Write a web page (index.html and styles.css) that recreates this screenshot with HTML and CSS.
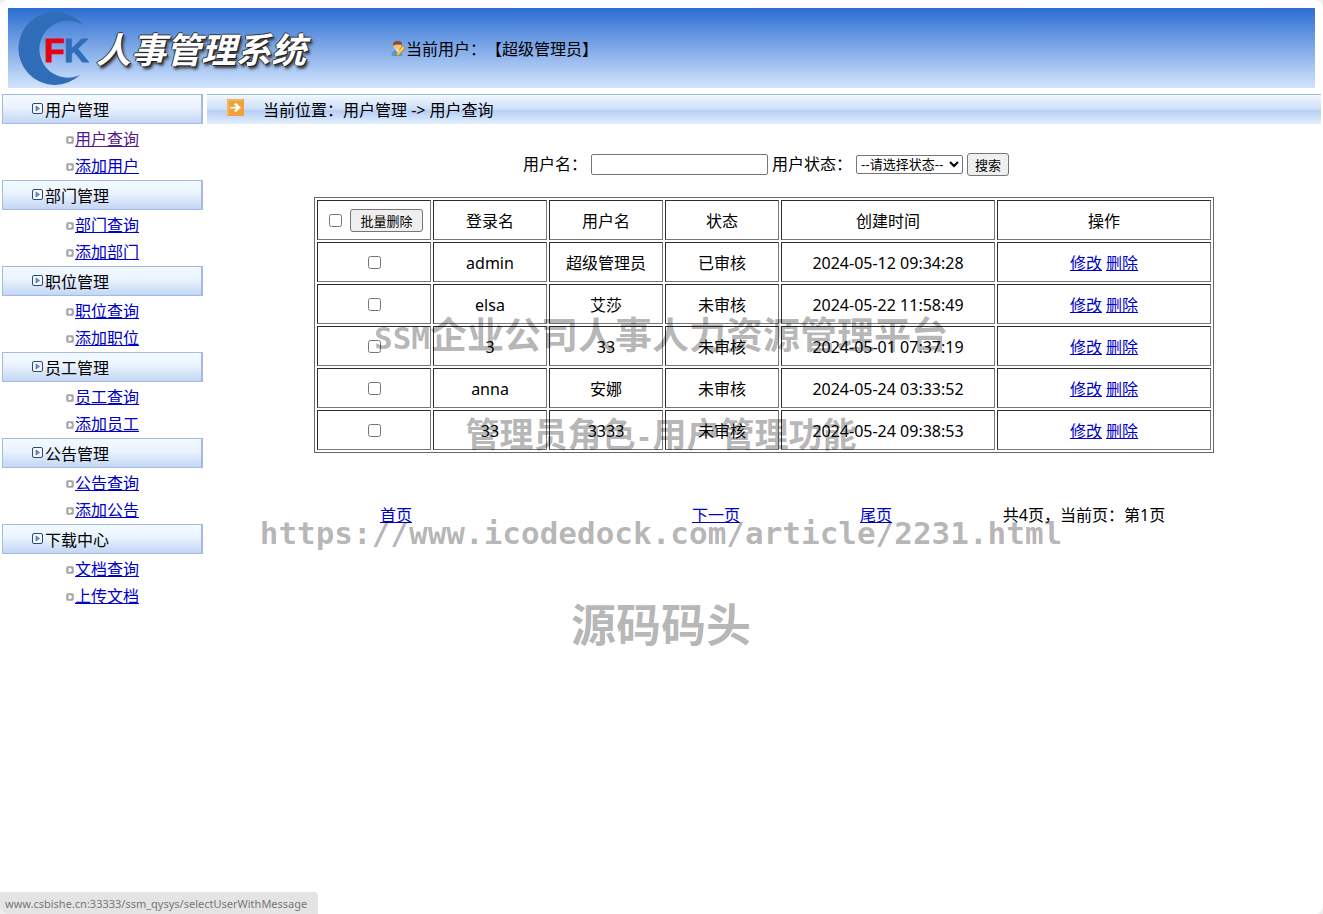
FILE: index.html
```html
<!DOCTYPE html>
<html lang="zh-CN">
<head>
<meta charset="utf-8">
<title>人事管理系统</title>
<link rel="stylesheet" href="styles.css">
</head>
<body>
<svg class="defs" aria-hidden="true">
  <symbol id="play" viewBox="0 0 11 11"><rect x=".5" y=".5" width="10" height="10" rx="1.5" fill="#f5f9ff" stroke="#294a77"/><path d="M4 3v5l3.500-2.500z" fill="#7890bd" stroke="#4867a0" stroke-width=".7"/></symbol>
  <symbol id="dot" viewBox="0 0 8 8"><rect x=".5" y=".5" width="7" height="7" rx="1.500" fill="#a6a6a6" stroke="#b9b9b9"/><path d="M2.500 2h2.200L6.300 4 4.700 6H2.500z" fill="#fff"/></symbol>
</svg>
<div class="page">
<header class="header">
  <div class="brand">
    <svg class="logo" viewBox="0 0 82 80" role="img" aria-label="FK">
      <path d="M75 17 A36.500 36.500 0 1 0 72 67 A28.500 28.500 0 1 1 75 17Z" fill="#2f6db8"/>
      <text x="36" y="54" class="logo-f">F</text><text x="56" y="54" class="logo-k">K</text>
    </svg>
    <h1 class="brand-name">人事管理系统</h1>
  </div>
  <div class="user">
    <svg class="user-icon" viewBox="0 0 15 16"><path d="M1 15Q1 9 6 9T12 15Z" fill="#4f9bd5"/><path d="M5 8L8 13 9 8Z" fill="#fff"/><circle cx="7" cy="5" r="4" fill="#f5c184"/><path d="M2.500 5Q2 0 7 0T11.500 4L8 3.500 4 4Z" fill="#875125"/><path d="M5 14L12 5 15 7 8 15Z" fill="#f4bd45" stroke="#a46c28" stroke-width=".7"/><path d="M7 12L13 6" stroke="#fff0a5"/></svg>
    <span>当前用户：【超级管理员】</span>
  </div>
</header>
<div class="main">
  <nav class="sidebar">
    <h2 class="group"><svg><use href="#play"/></svg>用户管理</h2>
    <ul><li><svg><use href="#dot"/></svg><a class="visited" href="#user-list">用户查询</a></li><li><svg><use href="#dot"/></svg><a href="#user-add">添加用户</a></li></ul>
    <h2 class="group"><svg><use href="#play"/></svg>部门管理</h2>
    <ul><li><svg><use href="#dot"/></svg><a href="#dept-list">部门查询</a></li><li><svg><use href="#dot"/></svg><a href="#dept-add">添加部门</a></li></ul>
    <h2 class="group"><svg><use href="#play"/></svg>职位管理</h2>
    <ul><li><svg><use href="#dot"/></svg><a href="#job-list">职位查询</a></li><li><svg><use href="#dot"/></svg><a href="#job-add">添加职位</a></li></ul>
    <h2 class="group"><svg><use href="#play"/></svg>员工管理</h2>
    <ul><li><svg><use href="#dot"/></svg><a href="#staff-list">员工查询</a></li><li><svg><use href="#dot"/></svg><a href="#staff-add">添加员工</a></li></ul>
    <h2 class="group"><svg><use href="#play"/></svg>公告管理</h2>
    <ul><li><svg><use href="#dot"/></svg><a href="#notice-list">公告查询</a></li><li><svg><use href="#dot"/></svg><a href="#notice-add">添加公告</a></li></ul>
    <h2 class="group"><svg><use href="#play"/></svg>下载中心</h2>
    <ul><li><svg><use href="#dot"/></svg><a href="#doc-list">文档查询</a></li><li><svg><use href="#dot"/></svg><a href="#doc-add">上传文档</a></li></ul>
  </nav>
  <main class="content">
    <div class="location">
      <svg viewBox="0 0 17 17"><rect width="17" height="17" fill="#efa13d"/><path d="M1 16V1H16" fill="none" stroke="#f9c779"/><path d="M3 8H9L7 5 9 4 14 8.500 9 13 7 12 9 9.500H3Z" fill="#fff" stroke="#f6cf8d" stroke-width=".4"/></svg>
      <span>当前位置：用户管理 -&gt; 用户查询</span>
    </div>
    <form class="search">
      <label for="name">用户名：</label><input id="name" type="text">
      <label for="status">用户状态：</label><select id="status"><option>--请选择状态--</option></select>
      <button type="button">搜索</button>
    </form>
    <table class="users">
      <colgroup><col><col><col><col><col class="wide"><col class="wide"></colgroup>
      <thead><tr><th><div class="batch"><input type="checkbox" aria-label="全选"><button type="button">批量删除</button></div></th><th>登录名</th><th>用户名</th><th>状态</th><th>创建时间</th><th>操作</th></tr></thead>
      <tbody>
        <tr><td><input type="checkbox" aria-label="admin"></td><td>admin</td><td>超级管理员</td><td>已审核</td><td>2024-05-12 09:34:28</td><td><a href="#edit">修改</a> <a href="#delete">删除</a></td></tr>
        <tr><td><input type="checkbox" aria-label="elsa"></td><td>elsa</td><td>艾莎</td><td>未审核</td><td>2024-05-22 11:58:49</td><td><a href="#edit">修改</a> <a href="#delete">删除</a></td></tr>
        <tr><td><input type="checkbox" aria-label="3"></td><td>3</td><td>33</td><td>未审核</td><td>2024-05-01 07:37:19</td><td><a href="#edit">修改</a> <a href="#delete">删除</a></td></tr>
        <tr><td><input type="checkbox" aria-label="anna"></td><td>anna</td><td>安娜</td><td>未审核</td><td>2024-05-24 03:33:52</td><td><a href="#edit">修改</a> <a href="#delete">删除</a></td></tr>
        <tr><td><input type="checkbox" aria-label="33"></td><td>33</td><td>3333</td><td>未审核</td><td>2024-05-24 09:38:53</td><td><a href="#edit">修改</a> <a href="#delete">删除</a></td></tr>
      </tbody>
    </table>
    <div class="pager"><a href="#first">首页</a><span></span><a href="#next">下一页</a><a href="#last">尾页</a><span>共4页，当前页：第1页</span></div>
  </main>
</div>
<div class="watermark">
  <p class="mark-title"><span>SSM</span>企业公司人事人力资源管理平台</p>
  <p class="mark-role">管理员角色<span>-</span>用户管理功能</p>
  <p class="mark-url">https://www.icodedock.com/article/2231.html</p>
  <p class="mark-name">源码码头</p>
</div>
<div class="status">www.csbishe.cn:33333/ssm_qysys/selectUserWithMessage</div>
</div>
</body>
</html>
```
FILE: styles.css
```css
* { box-sizing: border-box; }
html { background: #eee; }
body { margin: 0; color: #000; font: 16px/20px "Noto Sans", "Noto Sans CJK SC", sans-serif; text-spacing-trim: space-all; }
.defs { display: none; }
.page { position: relative; min-height: 100vh; background: #fff; border-radius: 8px; overflow: hidden; }
a { color: #0000c8; }
a.visited { color: #551a8b; }
.header { display: flex; align-items: center; height: 80px; margin: 8px 8px 6px; background: linear-gradient(#2a6dd0, #7fa9e8 50%, #d3e4fd); }
.brand { display: flex; align-items: center; width: 382px; }
.logo { width: 82px; height: 80px; flex: none; }
.logo-f, .logo-k { font: bold 34px "Liberation Sans", sans-serif; fill: #e60012; stroke: #e60012; }
.logo-k { fill: #2f6db8; stroke: #2f6db8; }
.brand-name { margin: 0 0 0 6px; font: italic bold 35px/48px "Noto Sans CJK SC", sans-serif; color: #fff; white-space: nowrap; text-shadow: 1px 1px 0 #222, -1px 0 0 #333, 0 -1px 0 #333, 2px 3px 3px #333; }
.user { display: flex; align-items: center; padding-top: 1px; }
.user-icon { width: 16px; height: 16px; }
.main { display: flex; gap: 4px; padding: 0 2px; }
.sidebar { width: 201px; flex: none; }
.group { display: flex; align-items: center; gap: 2px; height: 30px; margin: 0; padding: 2px 0 0 29px; font-size: 16px; font-weight: 400; border: 1px solid #a3bbe0; border-right-width: 2px; background: linear-gradient(#f3f9ff, #eaf3fe 45%, #c3d6f5); }
.group svg { width: 11px; height: 11px; margin-bottom: 4px; }
.sidebar ul { list-style: none; margin: 0; padding: 1px 0 1px 64px; }
.sidebar li { display: flex; align-items: center; gap: 1px; height: 27px; }
.sidebar li svg { width: 8px; height: 8px; margin-top: 2px; }
.content { flex: 1; min-width: 0; }
.location { display: flex; align-items: center; gap: 19px; height: 30px; padding: 0 0 0 20px; border-top: 1px solid #a3b8dc; background: linear-gradient(#f0f8ff, #cbdcf6 52%, #b5cef3 54%, #e3effe); }
.location svg { width: 17px; height: 17px; margin-bottom: 4px; }
.search { display: flex; align-items: center; justify-content: center; gap: 4px; height: 24px; margin: 28px 0 21px 4px; }
.search label:first-child { width: 64px; }
.search label { width: 80px; }
input, button, select { margin: 0; font: 13px/17px "Noto Sans CJK SC", sans-serif; color: #000; }
.search input { width: 177px; height: 21px; border: 1px solid #767676; border-radius: 2px; }
select { width: 107px; height: 19px; padding: 0; border: 1px solid #767676; border-radius: 2px; background: #fff; font-family: "Liberation Sans", "Noto Sans CJK SC", sans-serif; }
button { display: flex; align-items: center; padding: 0 7px; height: 23px; border: 1px solid #767676; border-radius: 3px; background: #efefef; white-space: nowrap; }
.users { width: 900px; max-width: 100%; margin: 0 auto; table-layout: fixed; border: 1px solid #666; border-spacing: 2px; }
.wide { width: 214px; }
.users th, .users td { height: 40px; padding: 2px 1px 0; border: 1px solid; border-color: #2c2c2c #777 #777 #2c2c2c; font-weight: 400; text-align: center; }
.users input { width: 13px; height: 13px; vertical-align: 0; }
.batch { display: flex; align-items: center; justify-content: center; gap: 8px; padding: 0 0 2px 4px; }
.users button { padding: 0 9px; }
.pager { display: grid; grid-template-columns: repeat(4, 160px) 1fr; width: 900px; max-width: 100%; margin: 52px auto 0; padding: 0 2px; text-align: center; }
.pager a { justify-self: center; }
.watermark { position: absolute; top: 309px; left: 251px; width: 820px; pointer-events: none; text-align: center; color: rgba(0, 0, 0, .3); font-family: "Noto Sans CJK SC", sans-serif; font-weight: 700; }
.watermark p { margin: 0; white-space: nowrap; }
.mark-title { font-size: 37px; line-height: 48px; }
.mark-title span { font: bold 31px "DejaVu Sans Mono", monospace; }
.watermark .mark-role { margin-top: 54px; font-size: 34px; line-height: 44px; }
.mark-role span { display: inline-block; width: 17px; font: bold 28px/34px "DejaVu Sans Mono", monospace; }
.watermark .mark-url { margin-top: 56px; font: bold 31px/44px "DejaVu Sans Mono", monospace; }
.watermark .mark-name { margin-top: 38px; font-size: 45px; line-height: 60px; }
.status { position: fixed; left: 0; bottom: 0; height: 22px; padding: 2px 11px 0 5px; background: #e4e4e4; color: #777; font-size: 11px; border-radius: 0 4px 0 8px; }
```
